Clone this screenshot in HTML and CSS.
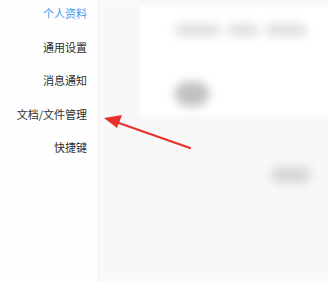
FILE: index.html
```html
<!DOCTYPE html>
<html>
<head>
<meta charset="utf-8">
<link rel="stylesheet" href="styles.css">
</head>
<body>
<div class="app">
  <nav class="sidebar">
    <div class="item active">个人资料</div>
    <div class="item">通用设置</div>
    <div class="item">消息通知</div>
    <div class="item">文档/文件管理</div>
    <div class="item">快捷键</div>
  </nav>
  <main class="main">
    <section class="card">
      <div class="line">
        <span class="word w1"></span>
        <span class="word w2"></span>
        <span class="word w3"></span>
      </div>
      <div class="avatar"></div>
    </section>
    <section class="lower">
      <div class="btn"></div>
    </section>
  </main>
</div>
<svg class="arrow" width="328" height="281" viewBox="0 0 328 281">
  <line x1="190" y1="148" x2="116" y2="122" stroke="#e8302a" stroke-width="2.2" stroke-linecap="round"/>
  <polygon points="104,118 122,115 117,128" fill="#e8302a"/>
</svg>
</body>
</html>
```
FILE: styles.css
```css
html, body {
  margin: 0;
  padding: 0;
  width: 328px;
  height: 281px;
  overflow: hidden;
  background: #fafafa;
  font-family: "Noto Sans CJK SC", "Liberation Sans", sans-serif;
}
.app {
  display: flex;
  height: 281px;
}
.sidebar {
  width: 99px;
  box-sizing: border-box;
  background: #fefefe;
  border-right: 1px solid #ececec;
  display: flex;
  flex-direction: column;
  align-items: flex-end;
  padding: 3px 11px 0 0;
  gap: 13.5px;
  position: relative;
  z-index: 1;
}
.item {
  font-size: 11px;
  line-height: 20px;
  height: 20px;
  color: #2e2e2e;
  white-space: nowrap;
}
.item.active {
  color: #3d9be9;
}
.main {
  flex: 1;
  display: flex;
  flex-direction: column;
  padding-left: 41px;
  background: #f8f8f8;
  filter: blur(2px);
  margin-right: -6px;
}
.card {
  height: 116px;
  background: #ffffff;
  border-top: 5px solid #f5f5f5;
  padding: 19px 0 0 35px;
  box-sizing: border-box;
}
.line {
  display: flex;
  gap: 6px;
  filter: blur(4px);
}
.word {
  height: 12px;
  border-radius: 6px;
  background: #dedede;
}
.w1 { width: 46px; }
.w2 { width: 32px; }
.w3 { width: 42px; }
.avatar {
  margin-top: 46px;
  width: 34px;
  height: 24px;
  border-radius: 12px;
  background: #c0c0c0;
  filter: blur(4px);
}
.lower {
  flex: 1;
  display: flex;
  justify-content: flex-end;
  padding: 51px 23px 0 0;
  background: #f8f8f8;
}
.btn {
  width: 40px;
  height: 16px;
  border-radius: 8px;
  background: #d6d6d6;
  filter: blur(4px);
}
.arrow {
  position: absolute;
  left: 0;
  top: 0;
  z-index: 2;
  pointer-events: none;
}
```
